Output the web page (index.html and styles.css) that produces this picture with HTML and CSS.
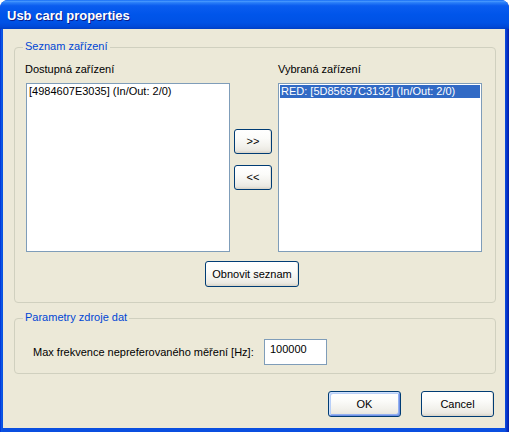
FILE: index.html
```html
<!DOCTYPE html>
<html>
<head>
<meta charset="utf-8">
<title>Usb card properties</title>
<link rel="stylesheet" href="styles.css">
</head>
<body>
<div class="window">
  <div class="titlebar">Usb card properties</div>
  <div class="client">
    <div class="group group-devices">
      <span class="group-title">Seznam zařízení</span>
      <div class="devices">
        <div class="col-label col-label-left">Dostupná zařízení</div>
        <div></div>
        <div class="col-label">Vybraná zařízení</div>
        <div class="listbox"><div class="item">[4984607E3035] (In/Out: 2/0)</div></div>
        <div class="transfer">
          <button class="btn btn-small">&gt;&gt;</button>
          <button class="btn btn-small btn-second">&lt;&lt;</button>
        </div>
        <div class="listbox"><div class="item selected">RED: [5D85697C3132] (In/Out: 2/0)</div></div>
      </div>
      <button class="btn btn-refresh">Obnovit seznam</button>
    </div>
    <div class="group group-params">
      <span class="group-title">Parametry zdroje dat</span>
      <div class="param-row">
        <span class="param-label">Max frekvence nepreferovaného měření [Hz]:</span>
        <div class="edit">100000</div>
      </div>
    </div>
    <div class="actions">
      <button class="btn btn-action btn-default">OK</button>
      <button class="btn btn-action">Cancel</button>
    </div>
  </div>
</div>
</body>
</html>
```
FILE: styles.css
```css
html, body {
  margin: 0;
  padding: 0;
  background: #ffffff;
}
body {
  font-family: "Liberation Sans", Arial, sans-serif;
  font-size: 11px;
  line-height: 13px;
  color: #000000;
}
.window {
  width: 509px;
  height: 432px;
  display: flex;
  flex-direction: column;
  background: linear-gradient(90deg, #0019cf 0, #0a5ae6 1px, #0a4fe0 3px, #0a4fe0 calc(100% - 4px), #0733c8 calc(100% - 2px), #001ea8 100%);
  border-radius: 8px 8px 0 0;
  overflow: hidden;
}
.titlebar {
  height: 29px;
  box-sizing: border-box;
  padding: 2px 0 0 7px;
  line-height: 27px;
  font-size: 13px;
  font-weight: bold;
  color: #ffffff;
  text-shadow: 1px 1px 0 #0a1c8a;
  background: linear-gradient(180deg, #0a61f3 0%, #4a9bff 4%, #2a7ef8 9%, #0a5cef 20%, #0055ea 50%, #0052e5 78%, #0049d8 92%, #003fc4 100%);
}
.client {
  flex: 1;
  margin: 0 4px 4px 3px;
  background: #ece9d8;
  display: flex;
  flex-direction: column;
  align-items: flex-start;
}
.group {
  box-sizing: border-box;
  width: 482px;
  margin-left: 11px;
  border: 1px solid #d0d0bf;
  border-radius: 4px;
  display: flex;
  flex-direction: column;
  align-items: flex-start;
}
.group-devices {
  margin-top: 18px;
  height: 256px;
}
.group-params {
  margin-top: 15px;
  height: 56px;
}
.group-title {
  margin-top: -8px;
  margin-left: 8px;
  padding: 0 2px;
  background: #ece9d8;
  color: #0046d5;
  line-height: 13px;
}
.devices {
  margin-top: 10px;
  margin-left: 11px;
  display: grid;
  grid-template-columns: 204px 48px 204px;
  grid-template-rows: 13px 169px;
  row-gap: 7px;
}
.col-label-left {
  margin-left: -1px;
}
.listbox {
  box-sizing: border-box;
  border: 1px solid #7f9db9;
  background: #ffffff;
  padding: 1px;
}
.item {
  height: 13px;
  line-height: 13px;
  padding-left: 1px;
  white-space: nowrap;
}
.item.selected {
  background: #316ac5;
  color: #ffffff;
}
.transfer {
  display: flex;
  flex-direction: column;
  align-items: flex-start;
  padding-top: 46px;
  padding-left: 4px;
}
.btn {
  box-sizing: border-box;
  font-family: "Liberation Sans", Arial, sans-serif;
  font-size: 11px;
  line-height: 13px;
  color: #000000;
  padding: 0;
  margin: 0;
  border: 1px solid #003c74;
  border-radius: 3px;
  background: linear-gradient(180deg, #ffffff 0%, #fcfcfa 35%, #f2f1ec 70%, #ebe9e2 88%, #d8d3c8 100%);
  box-shadow: inset -1px 0 0 #e4e1d7;
}
.btn-small {
  width: 38px;
  height: 25px;
}
.btn-second {
  margin-top: 11px;
}
.btn-refresh {
  margin-top: 9px;
  margin-left: 190px;
  width: 94px;
  height: 26px;
}
.param-row {
  margin-top: 15px;
  margin-left: 18px;
  display: flex;
  align-items: center;
}
.param-label {
  width: 231px;
}
.edit {
  box-sizing: border-box;
  width: 63px;
  height: 26px;
  padding: 3px 5px;
  border: 1px solid #7f9db9;
  background: #ffffff;
}
.actions {
  align-self: stretch;
  display: flex;
  justify-content: flex-end;
  gap: 20px;
  margin-top: 17px;
  padding-right: 11px;
}
.btn-action {
  width: 73px;
  height: 26px;
}
.btn-default {
  box-shadow: inset 1px 1px 0 #cee0fc, inset -1px -1px 0 #6f8fe4, inset 2px 2px 0 #b8cff8, inset -2px -2px 0 #93b1f0;
}
```
